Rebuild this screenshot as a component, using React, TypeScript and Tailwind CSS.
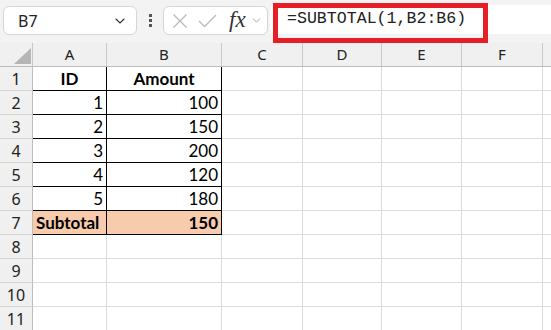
import { ChevronDown } from 'lucide-react';

const colWidths = [74, 115, 81, 79, 80, 81, 41];
const colNames = ['A', 'B', 'C', 'D', 'E', 'F', ''];

type Cell = { text?: string; align?: 'left' | 'right' | 'center'; bold?: boolean; fill?: boolean };

const rows: Cell[][] = [
  [{ text: 'ID', align: 'center', bold: true }, { text: 'Amount', align: 'center', bold: true }],
  [{ text: '1', align: 'right' }, { text: '100', align: 'right' }],
  [{ text: '2', align: 'right' }, { text: '150', align: 'right' }],
  [{ text: '3', align: 'right' }, { text: '200', align: 'right' }],
  [{ text: '4', align: 'right' }, { text: '120', align: 'right' }],
  [{ text: '5', align: 'right' }, { text: '180', align: 'right' }],
  [{ text: 'Subtotal', align: 'left', bold: true, fill: true }, { text: '150', align: 'right', bold: true, fill: true }],
  [],
  [],
  [],
  [],
];

export default function App() {
  return (
    <div className="w-[551px] h-[330px] overflow-hidden bg-white relative" style={{ fontFamily: '"Noto Sans", sans-serif' }}>
      {/* formula bar strip */}
      <div className="h-[43px] bg-[#f3f3f3] flex items-start pt-[6px] pl-[3px]">
        <div className="w-[134px] shrink-0 h-[29px] bg-white border border-[#d6d6d6] rounded-[6px] flex items-center pl-[14px] pr-[8px]">
          <span className="text-[16px] text-[#222] flex-1">B7</span>
          <ChevronDown className="w-[16px] h-[16px] text-[#333]" strokeWidth={1.6} />
        </div>
        <div className="w-[26px] shrink-0 h-[29px] flex flex-col items-center justify-center gap-[2px]">
          <div className="w-[3px] h-[3px] bg-[#555]" />
          <div className="w-[3px] h-[3px] bg-[#555]" />
          <div className="w-[3px] h-[3px] bg-[#555]" />
        </div>
        <div className="w-[105px] shrink-0 h-[29px] bg-white border border-[#d6d6d6] rounded-[6px] flex items-center pl-[7px]">
          <svg width="16" height="16" viewBox="0 0 16 16" className="ml-[1px] shrink-0">
            <path d="M1.5 1.5 L14.5 14.5 M14.5 1.5 L1.5 14.5" stroke="#b9b9b9" strokeWidth="1.3" fill="none" />
          </svg>
          <svg width="19" height="16" viewBox="0 0 19 16" className="ml-[10px] shrink-0">
            <path d="M1 8 L6.5 13.5 L18 2" stroke="#b9b9b9" strokeWidth="1.3" fill="none" />
          </svg>
          <span className="ml-[12px] text-[23px] italic leading-none text-[#333] mt-[-2px]" style={{ fontFamily: '"Liberation Serif", serif' }}>
            fx
          </span>
          <ChevronDown className="ml-[4px] w-[13px] h-[13px] text-[#999] shrink-0" strokeWidth={1.6} />
        </div>
        <div className="flex-1 h-[29px] ml-[2px] mt-[-1px] bg-white rounded-l-[6px] flex items-center pl-[17px]">
          <span className="text-[16.6px] text-[#222] whitespace-nowrap" style={{ fontFamily: '"Liberation Mono", monospace' }}>
            =SUBTOTAL(1,B2:B6)
          </span>
        </div>
      </div>

      {/* highlight around formula */}
      <div className="absolute left-[273px] top-[3px] w-[215px] h-[40px] border-[5px] border-[#e61f26]" />

      {/* column headers */}
      <div className="flex h-[24px] bg-[#f0f0f0] border-b border-[#bdbdbd]">
        <div className="w-[33px] shrink-0 border-r border-[#c8c8c8] relative">
          <svg width="17" height="16" viewBox="0 0 17 16" className="absolute left-[14px] top-[5px]">
            <path d="M17 0 L17 16 L0 16 Z" fill="#b5b5b5" />
          </svg>
        </div>
        {colNames.map((c, i) => (
          <div
            key={i}
            className="shrink-0 border-r border-[#c8c8c8] flex items-center justify-center text-[15px] text-[#222]"
            style={{ width: colWidths[i] }}
          >
            {c}
          </div>
        ))}
      </div>

      {/* rows */}
      {rows.map((row, r) => (
        <div key={r} className="flex h-[24px]">
          <div className="w-[33px] shrink-0 bg-[#f0f0f0] border-r border-b border-r-[#bdbdbd] border-b-[#d4d4d4] flex items-center justify-center text-[16px] text-[#222]">
            {r + 1}
          </div>
          {colNames.map((_, i) => {
            const cell = row[i];
            const inTable = r < 7 && i < 2;
            return (
              <div
                key={i}
                className={
                  'shrink-0 border-r border-b flex items-center px-[3px] text-[17px] text-black ' +
                  (inTable ? 'border-black ' : 'border-[#dcdcdc] ') +
                  (cell?.fill ? 'bg-[#f8cbad] ' : '') +
                  (cell?.bold ? 'font-bold ' : '') +
                  (cell?.align === 'right' ? 'justify-end' : cell?.align === 'center' ? 'justify-center' : 'justify-start')
                }
                style={{ width: colWidths[i], fontFamily: 'Lato, sans-serif' }}
              >
                {cell?.text}
              </div>
            );
          })}
        </div>
      ))}
    </div>
  );
}
